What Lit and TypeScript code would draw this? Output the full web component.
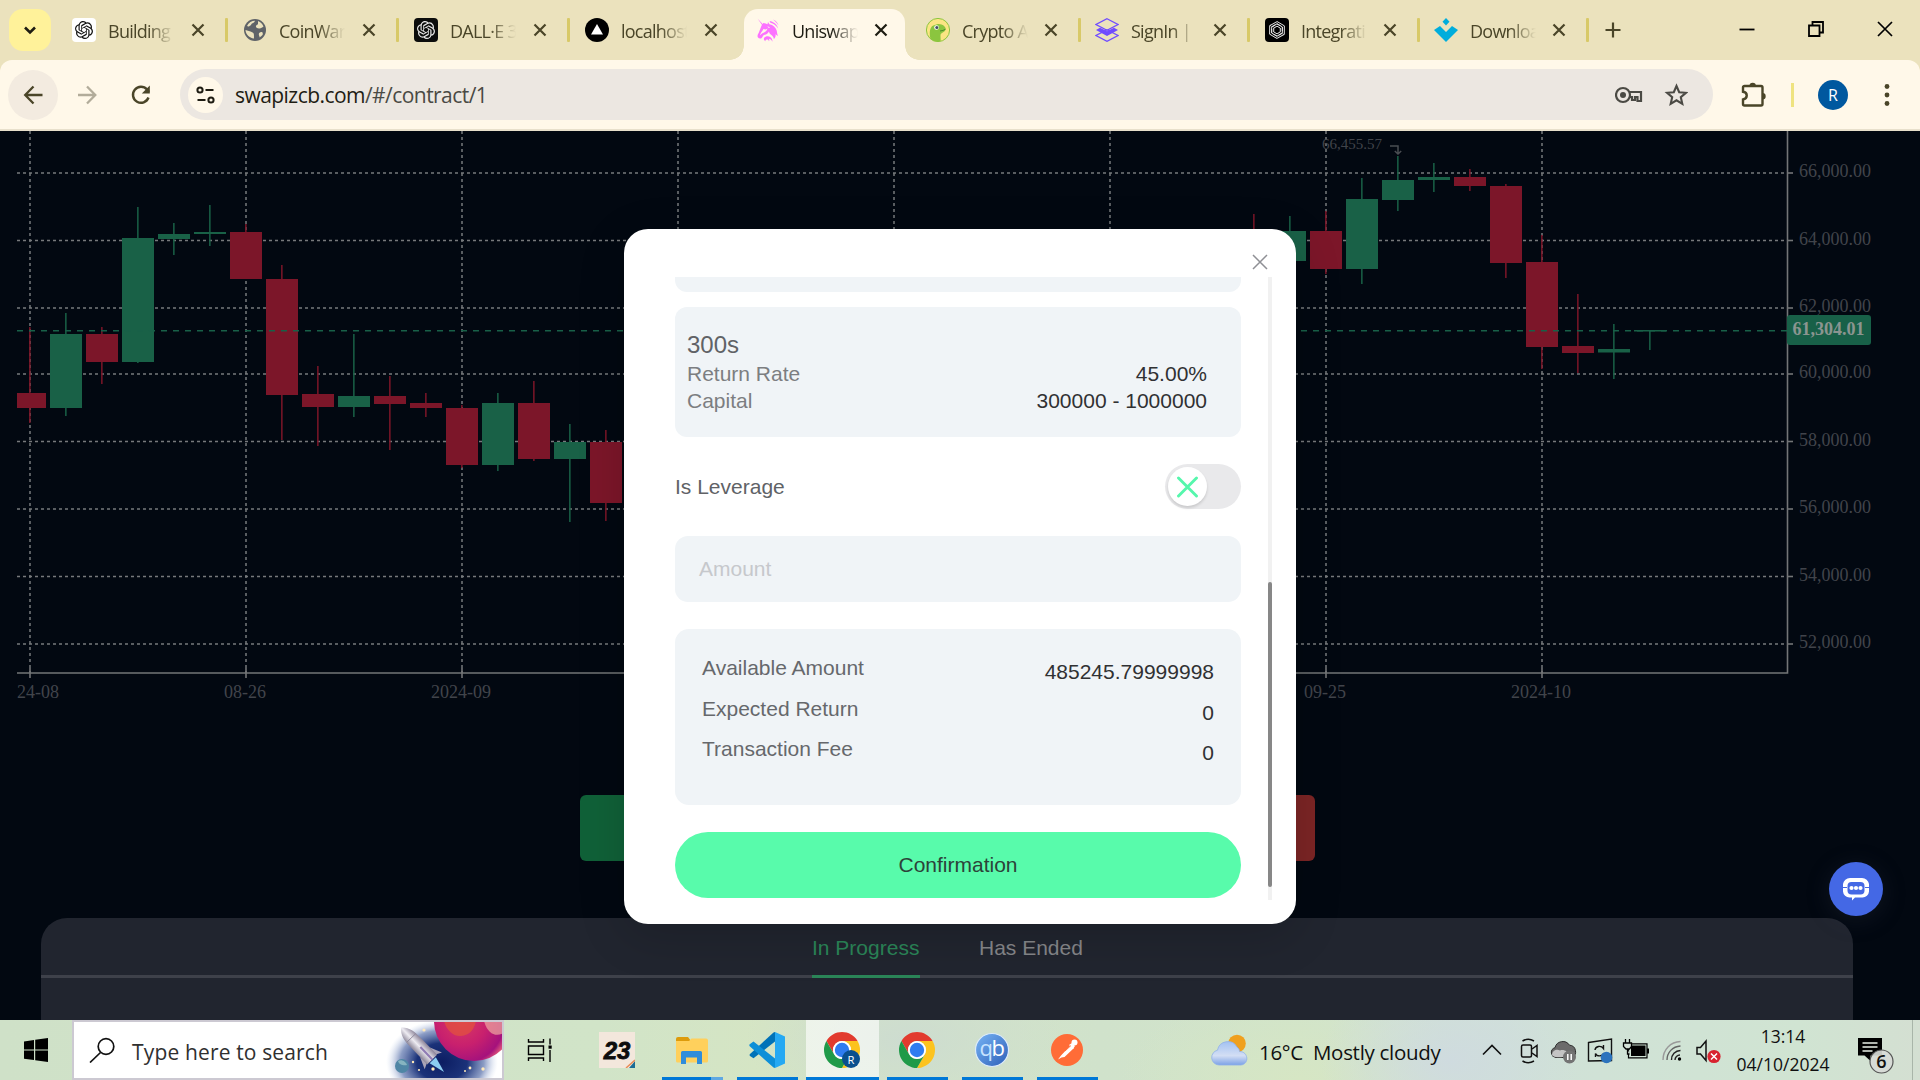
import { LitElement, html, svg, css, nothing } from "lit";
import { customElement } from "lit/decorators.js";
import { classMap } from "lit/directives/class-map.js";

const KNOT =
  "M22.2819 9.8211a5.9847 5.9847 0 0 0-.5157-4.9108 6.0462 6.0462 0 0 0-6.5098-2.9A6.0651 6.0651 0 0 0 4.9807 4.1818a5.9847 5.9847 0 0 0-3.9977 2.9 6.0462 6.0462 0 0 0 .7427 7.0966 5.98 5.98 0 0 0 .511 4.9107 6.051 6.051 0 0 0 6.5146 2.9001A5.9847 5.9847 0 0 0 13.2599 24a6.0557 6.0557 0 0 0 5.7718-4.2058 5.9894 5.9894 0 0 0 3.9977-2.9001 6.0557 6.0557 0 0 0-.7475-7.0729zm-9.022 12.6081a4.4755 4.4755 0 0 1-2.8764-1.0408l.1419-.0804 4.7783-2.7582a.7948.7948 0 0 0 .3927-.6813v-6.7369l2.02 1.1686a.071.071 0 0 1 .038.052v5.5826a4.504 4.504 0 0 1-4.4945 4.4944zm-9.6607-4.1254a4.4708 4.4708 0 0 1-.5346-3.0137l.142.0852 4.783 2.7582a.7712.7712 0 0 0 .7806 0l5.8428-3.3685v2.3324a.0804.0804 0 0 1-.0332.0615L9.74 19.9502a4.4992 4.4992 0 0 1-6.1408-1.6464zM2.3408 7.8956a4.485 4.485 0 0 1 2.3655-1.9728V11.6a.7664.7664 0 0 0 .3879.6765l5.8144 3.3543-2.0201 1.1685a.0757.0757 0 0 1-.071 0l-4.8303-2.7865A4.504 4.504 0 0 1 2.3408 7.872zm16.5963 3.8558L13.1038 8.364 15.1192 7.2a.0757.0757 0 0 1 .071 0l4.8303 2.7913a4.4944 4.4944 0 0 1-.6765 8.1042v-5.6772a.79.79 0 0 0-.407-.667zm2.0107-3.0231l-.142-.0852-4.7735-2.7818a.7759.7759 0 0 0-.7854 0L9.409 9.2297V6.8974a.0662.0662 0 0 1 .0284-.0615l4.8303-2.7866a4.4992 4.4992 0 0 1 6.6802 4.66zM8.3065 12.863l-2.02-1.1638a.0804.0804 0 0 1-.038-.0567V6.0742a4.4992 4.4992 0 0 1 7.3757-3.4537l-.142.0805L8.704 5.459a.7948.7948 0 0 0-.3927.6813zm1.0976-2.3654l2.602-1.4998 2.6069 1.4998v2.9994l-2.5974 1.4997-2.6067-1.4997Z";

const favicons: Record<string, unknown> = {
  knotLight: svg`<rect width="24" height="24" rx="4" fill="#fff"/><path transform="translate(3 3) scale(.75)" d=${KNOT} fill="#111"/>`,
  globe: svg`<circle cx="12" cy="12" r="11" fill="#5f6368"/><path d="M11 20.500c-4.600-.5-8.200-4-8.500-8.500L7.500 13.500c1.500.500 3 1 3.300 2.500.2 1 .2 3 .2 4.500zM4 8c1.500-3.500 5-5.200 8-5.200-.5 1.500-1.500 2-3 2.600-1 .6-.5 1.600-1.600 2C6.300 7.900 5.500 9 4 8zM15 2.900c2.700 1 4.600 3 5.500 5.600-1.500.800-2.500 2.300-4.500 2-1.500-.3-3.500-.8-3-2.500.3-1 2-1.200 2-2.200zM19.500 17c-.8.800-1.800 1.700-3 2.500.3-1.500-.7-2-.7-3.300 0-1.500 1.500-2.500 3-2.200 1 .2 1.300 2 .7 3z" fill="#ebe2bd"/>`,
  knotDark: svg`<rect width="24" height="24" rx="4" fill="#0c0d0c"/><path transform="translate(3 3) scale(.75)" d=${KNOT} fill="#e9e9e9"/>`,
  vercel: svg`<circle cx="12" cy="12" r="12" fill="#000"/><path d="M12 6l6 10.600H6z" fill="#fff"/>`,
  unicorn: svg`<g fill="#fc72ff"><path d="M1.500.500l6.500 7-1 .8z"/><path fill-rule="evenodd" d="M7.500 5c1.500.2 2.800.6 4 1.300l.5-2.300 1.400 2.200c3.800.7 6.200 3 7.200 6 .6 2 .4 3.800 1.500 5.600-1.400-.3-2.100-.9-2.500-1.800.3 2.100-.3 3.700-1.700 5-.2-1.400-.7-2.500-1.600-3.300-1.700-1.300-3-2-3.300-4.200-1 2-2.500 2.900-4.400 3.300-1.500.4-1.800 1.700-2.700 2.900-1 1.300-2.900 1.200-3.900-.2s-.3-3.100.5-4.300c1.500-2.500 2.500-8.200 5-10.200zM7.500 11c-1.300 2.500-3.200 4.300-3.700 6.500.8-1 1.700-1.700 2.700-2.200 2-1 4.500-1.800 5-4.700-1.500 1.300-2.800 1-4 .4zM11.300 8.300l2.700.9-1.200.7z"/><path d="M13.500 3c3.800.6 7.500 3 8.700 7.500-2-3.200-4.700-5-7.800-5.800zM17 1.500c3 1 5 3.500 5.500 6-1.500-2.500-3.500-4.300-5.500-6z"/><path d="M8 20c1.500-2 4.500-2.200 6.500-.8 1.300 1 2 2.600 2 4.500-1-1.800-2.200-2.900-3.800-3 .7.700.8 1.700.3 2.600-.4-1.300-1.200-2-2.300-1.800-.8.100-1.300.8-1.300 1.700C8 22.500 7.600 21.200 8 20z"/></g>`,
  gecko: svg`<circle cx="12" cy="12" r="11.600" fill="#fbe583" stroke="#8cc63f" stroke-width="1"/><path d="M4.500 21C2.800 14.500 4 8 8.500 7c3-1.200 4.500-1.500 7-.5 3 1 4.500 3.200 4 5.200-.6 2.300-4 2.800-4.800 4.600-.6 1.800.3 4.500-.2 7A11 11 0 0 1 4.500 21z" fill="#8bc53f"/><path d="M14 13c2-.2 4-.7 5.500-1.800" stroke="#4b8b2b" fill="none"/><circle cx="10.500" cy="9.500" r="2.300" fill="#fff"/><circle cx="10.800" cy="9.500" r="1.500" fill="#444b60"/>`,
  stack: svg`<path d="M12 .7l11 5.800-11 5.800L1 6.500zM12 11.700l11 5.800-11 5.800-11-5.800z" fill="none" stroke="#6f4bff" stroke-width="1.300"/><path d="M1 12l4-2.300 7 3.600 7-3.600L23 12l-11 6z" fill="#6f4bff"/>`,
  aperture: svg`<rect width="24" height="24" rx="4" fill="#000"/><g fill="none" stroke="#e6e6e6" stroke-width="1">${[0, 60, 120, 180, 240, 300].map(
    (a) => svg`<path transform="rotate(${a} 12 12)" d="M12 3.500L19.300 7.800M12 5.800L17.300 8.900V13M12 8.200L15.300 10.100"/>`,
  )}</g>`,
  diamond: svg`<g fill="#00addc"><path d="M12 0l3.500 3.700L12 7.500 8.500 3.700z"/><path d="M6 8l6 6 6-6 6 4-4 4-8 8-8-8-4-4z"/></g>`,
};

interface TabInfo {
  icon: string;
  label: string;
  active?: boolean;
  noSep?: boolean;
}

const TABS: TabInfo[] = [
  { icon: "knotLight", label: "Building" },
  { icon: "globe", label: "CoinWar" },
  { icon: "knotDark", label: "DALL·E 3" },
  { icon: "vercel", label: "localhost", noSep: true },
  { icon: "unicorn", label: "Uniswap", active: true, noSep: true },
  { icon: "gecko", label: "Crypto A" },
  { icon: "stack", label: "SignIn | " },
  { icon: "aperture", label: "Integrati" },
  { icon: "diamond", label: "Downloa" },
];

@customElement("browser-bar")
class BrowserBar extends LitElement {
  static styles = css`
    :host { display: block; background: #ebe2bd; font-family: "Open Sans", "Noto Sans", sans-serif; }
    svg { display: block; flex: none; }
    .strip { display: flex; height: 60px; align-items: flex-start; }
    .search { width: 42px; height: 42px; margin: 9px 9px 0; border-radius: 14px; background: #fff29a; display: grid; place-items: center; }
    .tabs { display: grid; grid-template-columns: 171px 171px 171px 171px 170px 169px 170px 169px 168px; height: 60px; }
    .tab { display: flex; align-items: center; padding: 0 0 0 12px; margin-top: 9px; height: 42px; }
    .tab.active { background: #fff8e9; width: 161px; height: 51px; border-radius: 14px 14px 0 0; box-sizing: border-box; padding-bottom: 9px; position: relative; }
    .tab.active::before, .tab.active::after { content: ""; position: absolute; bottom: 0; width: 14px; height: 14px; }
    .tab.active::before { left: -14px; background: radial-gradient(circle at 0 0, transparent 13.5px, #fff8e9 14px); }
    .tab.active::after { right: -14px; background: radial-gradient(circle at 100% 0, transparent 13.5px, #fff8e9 14px); }
    .label { width: 66px; margin-left: 12px; overflow: hidden; white-space: nowrap; font-size: 18px; letter-spacing: -0.75px; color: #4a4528; line-height: 26px; padding-top: 1px;
      -webkit-mask-image: linear-gradient(90deg, #000 60%, transparent 100%); mask-image: linear-gradient(90deg, #000 60%, transparent 100%); }
    .active .label { color: #1e1c12; }
    .x { margin-left: 4px; }
    .tab:nth-child(n + 5) .x { margin-left: 2.5px; }
    .sep { width: 3px; height: 24px; margin-left: 7px; background: #d8c968; border-radius: 1px; }
    .plus { margin: 22px 0 0 15px; }
    .win { display: flex; gap: 53px; margin: 21px 27px 0 auto; }
    .bar { display: flex; align-items: center; height: 69px; background: #fff8e9; border-radius: 12px 12px 0 0; border-bottom: 2px solid #e8e0cc; padding: 0 20px 0 8px; }
    .round { width: 50px; height: 50px; border-radius: 50%; display: grid; place-items: center; }
    .back { background: #f3ebe0; }
    .fwd { margin-left: 4px; }
    .reload { margin-left: 4px; }
    .omni { display: flex; align-items: center; width: 1533px; box-sizing: border-box; height: 51px; border-radius: 26px; background: #ece7e1; margin-left: 14px; padding: 0 25px 0 8px; }
    .site { width: 35px; height: 36px; border-radius: 50%; background: #fff8e9; display: grid; place-items: center; }
    .url { margin-left: 12px; font-size: 21px; letter-spacing: -0.55px; color: #4a4a44; line-height: 30px; }
    .url b { font-weight: 400; color: #1f1d14; }
    .key { margin-left: auto; }
    .star { margin-left: 21px; }
    .ext { margin-left: 27px; }
    .vsep { width: 3px; height: 24px; background: #efe380; margin-left: 24px; }
    .avatar { width: 30px; height: 30px; border-radius: 50%; background: #00589f; color: #fff; font-size: 16px; line-height: 30px; text-align: center; margin-left: 24px; }
    .dots { margin-left: 33px; }
  `;

  render() {
    return html`
      <div class="strip">
        <div class="search"><svg width="16" height="16" viewBox="0 0 16 16"><path d="M3 5.500l5 5 5-5" fill="none" stroke="#1e1c12" stroke-width="2.600"/></svg></div>
        <div class="tabs">
          ${TABS.map(
            (t) => html`<div class=${classMap({ tab: true, active: !!t.active })}>
              <svg width="24" height="24" viewBox="0 0 24 24">${favicons[t.icon]}</svg>
              <span class="label">${t.label}</span>
              <svg class="x" width="40" height="24" viewBox="0 0 40 24"><path d="M14.500 6.500l11 11M25.500 6.500l-11 11" stroke=${t.active ? "#1e1c12" : "#4a4528"} stroke-width="2.200"/></svg>
              ${t.noSep ? nothing : html`<i class="sep"></i>`}
            </div>`,
          )}
        </div>
        <svg class="plus" width="16" height="16" viewBox="0 0 16 16"><path d="M8 .5v15M.5 8h15" stroke="#4a4528" stroke-width="2.200"/></svg>
        <div class="win">
          <svg width="16" height="16" viewBox="0 0 16 16"><path d="M.5 8.500h15" stroke="#000" stroke-width="1.800"/></svg>
          <svg width="16" height="16" viewBox="0 0 16 16"><path d="M1 4.500h10.500V15H1zM4.500 4.500V1H15v10.500h-3.500" fill="none" stroke="#000" stroke-width="1.800"/></svg>
          <svg width="16" height="16" viewBox="0 0 16 16"><path d="M1 1l14 14M15 1L1 15" stroke="#000" stroke-width="1.700"/></svg>
        </div>
      </div>
      <div class="bar">
        <div class="round back"><svg width="24" height="24" viewBox="0 0 24 24"><path d="M21.500 12H5M12.500 3.500L4.200 12l8.300 8.500" fill="none" stroke="#4a4528" stroke-width="2.300"/></svg></div>
        <div class="round fwd"><svg width="24" height="24" viewBox="0 0 24 24"><path d="M3 12h16.500M12 3.500l8.300 8.500-8.300 8.500" fill="none" stroke="#b2ac9a" stroke-width="2.300"/></svg></div>
        <div class="round reload"><svg width="24" height="24" viewBox="0 0 24 24"><path d="M19.500 14.500A8 8 0 1 1 18 6.500L20 9" fill="none" stroke="#4a4528" stroke-width="2.400"/><path d="M20.800 2.500v8h-8z" fill="#4a4528"/></svg></div>
        <div class="omni">
          <div class="site"><svg width="20" height="20" viewBox="0 0 20 20" fill="none" stroke="#1e1c12" stroke-width="2"><circle cx="4" cy="5" r="2.600"/><path d="M9.500 5h8M1.500 15h8"/><circle cx="15" cy="15" r="2.600"/></svg></div>
          <div class="url"><b>swapizcb.com</b>/#/contract/1</div>
          <svg class="key" width="28" height="20" viewBox="0 0 28 20"><circle cx="8" cy="10" r="7" fill="none" stroke="#4b4a44" stroke-width="2.200"/><circle cx="8" cy="10" r="3" fill="#4b4a44"/><path d="M14.500 7H26v9h-3.500v-4H20v3h-3v-3h-2.500" fill="none" stroke="#4b4a44" stroke-width="2.200"/></svg>
          <svg class="star" width="24" height="24" viewBox="0 0 24 24"><path d="M12.500 3l2.700 6.200 6.700.6-5.100 4.400 1.500 6.600-5.800-3.500-5.800 3.500 1.500-6.600-5.100-4.400 6.700-.6z" fill="none" stroke="#4b4a44" stroke-width="2.100"/></svg>
        </div>
        <svg class="ext" width="27" height="27" viewBox="0 0 27 27"><path d="M3 6.500a1.500 1.500 0 0 1 1.500-1.500H21a1.500 1.500 0 0 1 1.500 1.500V23a1.500 1.500 0 0 1-1.500 1.500H4.500A1.500 1.500 0 0 1 3 23v-4.500c5-.8 5-7 0-7.700z" fill="none" stroke="#4a4528" stroke-width="2.400"/><path d="M9.500 5a3.200 3.200 0 0 1 6.400 0zM22.500 12a3.200 3.200 0 0 1 0 6.400z" fill="#4a4528"/></svg>
        <i class="vsep"></i>
        <div class="avatar">R</div>
        <svg class="dots" width="12" height="24" viewBox="0 0 12 24" fill="#4a4528"><circle cx="6" cy="3.500" r="2.400"/><circle cx="6" cy="12" r="2.400"/><circle cx="6" cy="20.500" r="2.400"/></svg>
      </div>
    `;
  }
}

// [slot, up, high, bodyTop, bodyBottom, low]
type Candle = [number, boolean, number, number, number, number];
const CANDLES: Candle[] = [
  [0, false, 327, 393, 408, 423],
  [1, true, 313, 334, 408, 416],
  [2, false, 327, 334, 362, 384],
  [3, true, 207, 238, 362, 363],
  [4, true, 223, 234, 239, 255],
  [5, true, 205, 232, 234, 246],
  [6, false, 224, 232, 279, 279],
  [7, false, 265, 279, 395, 440],
  [8, false, 366, 394, 407, 446],
  [9, true, 334, 396, 407, 417],
  [10, false, 376, 396, 404, 450],
  [11, false, 393, 403, 408, 417],
  [12, false, 405, 408, 465, 468],
  [13, true, 393, 403, 465, 471],
  [14, false, 381, 403, 459, 461],
  [15, true, 424, 442, 459, 522],
  [16, false, 430, 442, 503, 521],
  [34, false, 214, 240, 262, 270],
  [35, true, 216, 231, 261, 268],
  [36, false, 211, 231, 269, 274],
  [37, true, 178, 199, 269, 284],
  [38, true, 156, 180, 200, 211],
  [39, true, 163, 177, 180, 192],
  [40, false, 169, 177, 186, 191],
  [41, false, 184, 186, 263, 278],
  [42, false, 235, 262, 347, 369],
  [43, false, 294, 346, 353, 373],
  [44, true, 324, 349, 352.5, 379],
  [45, true, 330, 330, 331.5, 350],
];
const H_LINES: [number, string][] = [
  [173, "66,000.00"],
  [240.5, "64,000.00"],
  [308, "62,000.00"],
  [374, "60,000.00"],
  [441.5, "58,000.00"],
  [509, "56,000.00"],
  [576.5, "54,000.00"],
  [644, "52,000.00"],
];
const V_LINES: [number, string][] = [
  [30, "24-08"],
  [246, "08-26"],
  [462, "2024-09"],
  [678, ""],
  [894, ""],
  [1110, ""],
  [1326, "09-25"],
  [1542, "2024-10"],
];

@customElement("price-chart")
class PriceChart extends LitElement {
  static styles = css`
    :host { display: block; height: 619px; }
    svg { display: block; }
    text { font-family: "Liberation Serif", serif; font-size: 18px; fill: #41444b; }
    .mark { font-size: 15px; }
    .now { font-weight: 700; fill: #8b9590; }
    .mid { text-anchor: middle; }
    .grid { stroke: #77797c; stroke-width: 1.5; stroke-dasharray: 3 3; }
    .axis { stroke: #737577; stroke-width: 1.6; }
  `;

  render() {
    return html`<svg width="1920" height="619" viewBox="0 131 1920 619">
      <defs><clipPath id="plot"><rect x="17" y="131" width="1771" height="550"/></clipPath></defs>
      ${H_LINES.map(
        ([y, t]) => svg`<line class="grid" x1="17" x2="1787" y1=${y} y2=${y}/>
          <line class="axis" x1="1787" x2="1793" y1=${y} y2=${y}/>
          <text x="1799" y=${y + 4}>${t}</text>`,
      )}
      ${V_LINES.map(
        ([x, t]) => svg`<line class="grid" x1=${x} x2=${x} y1="131" y2="673"/>
          <line class="axis" x1=${x} x2=${x} y1="668" y2="678"/>
          <text class="mid" x=${x === 30 ? 38 : x - 1} y="698">${t}</text>`,
      )}
      <path class="axis" d="M17 673H1787.500V131" fill="none"/>
      <g clip-path="url(#plot)">
        ${CANDLES.map(([k, up, hi, top, bot, lo]) => {
          const c = 29.8 + 36 * k;
          const fill = up ? "#196147" : "#7c1629";
          return svg`<rect x=${c - 0.7} y=${hi} width="1.500" height=${lo - hi} fill=${fill}/>
            <rect x=${Math.round(c - 16)} y=${top} width="32" height=${bot - top} fill=${fill}/>`;
        })}
      </g>
      <line x1="17" x2="1787" y1="330.800" y2="330.800" stroke="#186048" stroke-width="1.500" stroke-dasharray="6 6"/>
      <text class="mark" x="1322" y="149">66,455.57</text>
      <path d="M1390 146h8v7.500M1394.800 151l3.200 3 3.200-3" fill="none" stroke="#4a4d52" stroke-width="1.500"/>
      <rect x="1787" y="315" width="84" height="30" rx="3" fill="#186048"/>
      <text class="now" x="1792.500" y="335">61,304.01</text>
    </svg>`;
  }
}

@customElement("order-dialog")
class OrderDialog extends LitElement {
  static styles = css`
    :host { display: flex; flex-direction: column; box-sizing: border-box; background: #fff; border-radius: 24px; box-shadow: 0 12px 48px rgba(0, 0, 0, 0.16); font: 21px/27px "Liberation Sans", Arial, sans-serif; color: #606266; }
    svg { display: block; }
    .head { display: flex; justify-content: flex-end; height: 48px; padding: 25px 28px 0 0; box-sizing: border-box; }
    .body { display: flex; height: 623px; padding-left: 51px; gap: 27px; }
    .col { width: 566px; display: flex; flex-direction: column; gap: 27px; }
    .stub { height: 15px; background: #f0f4f7; border-radius: 0 0 12px 12px; margin-bottom: -12px; }
    .plan { height: 130px; box-sizing: border-box; background: #f0f4f7; border-radius: 12px; padding: 21px 34px 0 12px; }
    .title { font-size: 24px; line-height: 32px; padding-top: 1px; margin-bottom: -1px; }
    .row { display: flex; justify-content: space-between; color: #7c7e81; }
    .row b { font-weight: 400; color: #303133; }
    .lever { display: flex; justify-content: space-between; align-items: center; height: 45px; }
    .switch { width: 76px; height: 45px; border-radius: 23px; background: #e9e9eb; padding: 3px; box-sizing: border-box; }
    .knob { width: 39px; height: 39px; border-radius: 50%; background: #fff; display: grid; place-items: center; box-shadow: 0 2px 3px rgba(0, 0, 0, 0.14); }
    .amount { height: 66px; border-radius: 13px; background: #f0f4f7; line-height: 66px; padding-left: 24px; color: #c6c8cc; }
    .sum { height: 176px; box-sizing: border-box; border-radius: 14px; background: #f0f4f7; padding: 25px 27px 0; }
    .line { display: flex; justify-content: space-between; height: 40.5px; color: #66686c; }
    .line b { font-weight: 400; color: #303133; padding-top: 4px; }
    .ok { height: 66px; border-radius: 33px; background: #58fbab; color: #2c4339; line-height: 66px; text-align: center; }
    .track { width: 4px; background: #f1f1f1; padding-top: 305px; box-sizing: border-box; }
    .thumb { height: 305px; background: #878787; border-radius: 2px; }
  `;

  render() {
    const sums = [
      ["Available Amount", "485245.79999998"],
      ["Expected Return", "0"],
      ["Transaction Fee", "0"],
    ];
    return html`
      <div class="head"><svg width="16" height="16" viewBox="0 0 16 16"><path d="M1 1l14 14M15 1L1 15" stroke="#8f9095" stroke-width="1.500"/></svg></div>
      <div class="body">
        <div class="col">
          <div class="stub"></div>
          <div class="plan">
            <div class="title">300s</div>
            <div class="row"><span>Return Rate</span><b>45.00%</b></div>
            <div class="row"><span>Capital</span><b>300000 - 1000000</b></div>
          </div>
          <div class="lever">
            <span>Is Leverage</span>
            <div class="switch"><div class="knob"><svg width="22" height="22" viewBox="0 0 22 22"><path d="M1.500 2l18 18M19.500 2l-18 18" stroke="#55f7ac" stroke-width="2.900" stroke-linecap="round"/></svg></div></div>
          </div>
          <div class="amount">Amount</div>
          <div class="sum">${sums.map(([k, v]) => html`<div class="line"><span>${k}</span><b>${v}</b></div>`)}</div>
          <div class="ok">Confirmation</div>
        </div>
        <div class="track"><div class="thumb"></div></div>
      </div>
    `;
  }
}

const chromeLogo = svg`<path d="M24 12h20.780A24 24 0 0 0 3.220 12L13.600 30A12 12 0 0 1 24 12z" fill="#e23b2e"/><path d="M34.400 30L24 48A24 24 0 0 0 44.780 12H24a12 12 0 0 1 10.400 18z" fill="#fcc31e"/><path d="M13.600 30L3.220 12A24 24 0 0 0 24 48l10.400-18a12 12 0 0 1-20.800 0z" fill="#1f9a48"/><circle cx="24" cy="24" r="12" fill="#fff"/><circle cx="24" cy="24" r="9.600" fill="#2f7cf0"/>`;

const apps: { box: string; art: unknown; run: string }[] = [
  {
    box: "0 0 36 36", run: "",
    art: svg`<g fill="none" stroke="#000" stroke-width="1.400"><path d="M4.500 7v3h15V7M4.500 29v-3h15v3M4.500 14h15v8.500h-15z"/><path d="M26 6.500v6M26 18v12"/></g><rect x="24.500" y="13.500" width="3.200" height="3.200" fill="#000"/>`,
  },
  {
    box: "0 0 36 36", run: "",
    art: svg`<rect width="36" height="36" fill="#f3e7dc"/><path d="M36 29v7h-6z" fill="#1c6c96"/><path d="M27 36l9-8" stroke="#e98b56" stroke-width="1.500"/><text x="18" y="26.500" text-anchor="middle" font-family="Liberation Sans, sans-serif" font-weight="700" font-style="italic" font-size="24" stroke="#0d0d0d" stroke-width=".8" fill="#0d0d0d">23</text>`,
  },
  {
    box: "0 0 36 36", run: "split",
    art: svg`<path d="M2 7a2 2 0 0 1 2-2h10l3 4H2z" fill="#dd9b0c"/><path d="M2 9h13l2.500-2.500H32A2 2 0 0 1 34 8.500V29a1.500 1.500 0 0 1-1.500 1.500h-29A1.500 1.500 0 0 1 2 29z" fill="#ffd05c"/><path d="M7 32V20.500a1.500 1.500 0 0 1 1.500-1.500h18a1.500 1.500 0 0 1 1.500 1.500V32h-5v-6.500H12V32z" fill="#2f8ddb"/>`,
  },
  {
    box: "0 0 36 36", run: "on",
    art: svg`<path d="M26 0v9.500L4.500 26.300 1 24a1.500 1.500 0 0 1 0-2L24.500.600z" fill="#0072b8"/><path d="M1 12l3.500-2.500L26 26.500V36l-1.500-.5L1 14.500a1.500 1.500 0 0 1 0-2.500z" fill="#0d8fd8"/><path d="M26 0l10 4.500v27L26 36z" fill="#25a9f3"/>`,
  },
  {
    box: "0 0 48 48", run: "wide",
    art: svg`${chromeLogo}<circle cx="36" cy="36" r="12" fill="#0a4f8e"/><text x="36" y="42" text-anchor="middle" font-family="Open Sans, sans-serif" font-size="15" fill="#fff">R</text>`,
  },
  { box: "0 0 48 48", run: "on", art: chromeLogo },
  {
    box: "0 0 36 36", run: "on",
    art: svg`<defs><linearGradient id="qbg" x2="1" y2="1"><stop stop-color="#78b4f5"/><stop offset="1" stop-color="#2c5fb8"/></linearGradient></defs><circle cx="18" cy="18" r="16.500" fill="url(#qbg)" stroke="#dcebfa" stroke-width="1.200"/><text x="5.500" y="24" font-family="Open Sans, sans-serif" font-size="22" fill="#c8e3ff">q</text><text x="17.500" y="24" font-family="Open Sans, sans-serif" font-size="22" fill="#fff">b</text>`,
  },
  {
    box: "0 0 36 36", run: "on",
    art: svg`<circle cx="18" cy="18" r="16" fill="#ff6c37"/><path d="M9 27.500l3-4 10-10.500 3 3-9.500 9-3 .5z" fill="#fff"/><path d="M20 13l3-2 3 3-2 3z" fill="#fff"/><circle cx="25.500" cy="10.500" r="3" fill="#fff"/><path d="M16 19l6-5.500" stroke="#ff6c37" stroke-width=".9"/>`,
  },
];

const tray = [
  svg`<path d="M9 21.500l9-9 9 9" fill="none" stroke="#111" stroke-width="1.600"/>`,
  svg`<g fill="none" stroke="#111" stroke-width="1.500"><rect x="11.500" y="12" width="10" height="12" rx="1.500"/><path d="M22 16l5-3.500v11L22 20M12.500 8c3.500-2 8-2 11.500 0M12.500 28c3.500 2 8 2 11.500 0"/></g>`,
  svg`<path d="M10 24.500a5 5 0 0 1-1-9.800 8 8 0 0 1 14.500-2.500A6.500 6.500 0 0 1 26 24.500z" fill="#6b6b6b" stroke="#2b2b2b"/><path d="M6 22c.5-5 5-6 8-4.500 4-1.500 8 1 8.500 4.500-1 2.500-15 3.500-16.500 0z" fill="#c4c4c4"/><circle cx="23.500" cy="24" r="6.500" fill="#747474"/><path d="M21.800 21v6M25.200 21v6" stroke="#fff" stroke-width="1.500"/>`,
  svg`<path d="M6.500 9.500L29.500 6v21.500l-23 .5z" fill="none" stroke="#111" stroke-width="1.400"/><path d="M13 17c.5-4 6-5 8.500-1.500V12M22 20c-1.500 3.500-7 4-8.500.5V24" fill="none" stroke="#111" stroke-width="1.400"/><circle cx="24.500" cy="24.500" r="5.800" fill="#2b72bd"/>`,
  svg`<rect x="13" y="12.500" width="14.500" height="10.500" fill="#000"/><path d="M10.500 10.800h18.500v14H10.500z" fill="none" stroke="#000" stroke-width="1.200"/><rect x="29" y="15.500" width="2" height="5" fill="#000"/><path d="M7.500 6v4M11.500 6v4M5.500 10h8v3.500l-2 2.500H8l-2.500-2.500zM9.500 16v5h2" fill="#d3e0d6" stroke="#000" stroke-width="1.300"/>`,
  svg`<g fill="none" stroke="#222" stroke-width="1.400"><path d="M21 27a5 5 0 0 1 5-5" /><path d="M17.500 27a9 9 0 0 1 9-9.500"/><path d="M13 27c0-7.500 5.500-13.500 13.500-14" stroke="#666"/><path d="M9 27C9 16.500 16.500 9 26.500 8.500" stroke="#999"/></g><circle cx="25.500" cy="26" r="1.700" fill="#000"/>`,
  svg`<path d="M7 14.500h3.500l5.500-6.500v19.500L10.500 21H7z" fill="none" stroke="#111" stroke-width="1.500"/><circle cx="24" cy="23.500" r="6.600" fill="#d8232f"/><path d="M21 20.500l6 6M27 20.500l-6 6" stroke="#fff" stroke-width="1.500"/>`,
];

@customElement("task-bar")
class TaskBar extends LitElement {
  static styles = css`
    :host { display: flex; height: 60px; font-family: "Open Sans", "Noto Sans", sans-serif; color: #101010;
      background: radial-gradient(ellipse 130px 90px at 1450px 40px, #cfdbdf, transparent), radial-gradient(ellipse 160px 80px at 905px 20px, #cddcd0, transparent), radial-gradient(ellipse 180px 90px at 1300px 60px, #d6e6c4, transparent), linear-gradient(90deg, #cfe1c8 0, #d1e4c8 600px, #d5e5c4 760px, #d0e2cb 1100px, #d1e4ca 1300px, #d0e1d8 1500px, #d0e4d2 1800px, #d4dfd2 1920px); }
    svg { display: block; }
    .start { width: 72px; display: grid; place-items: center; }
    .search { width: 432px; height: 60px; box-sizing: border-box; border: 2px solid #ccc9d2; background: #fff; display: flex; align-items: center; font-size: 21px; letter-spacing: 0.15px; color: #303030; overflow: hidden; }
    .glass { margin-left: 15px; }
    .hint { margin-left: 17px; width: 233px; padding-top: 3px; white-space: nowrap; }
    .art { margin: 0 -2px 0 auto; }
    .app { width: 75px; display: flex; flex-direction: column; align-items: center; justify-content: space-between; padding-top: 12px; box-sizing: border-box; }
    .app.active { background: linear-gradient(rgba(255, 255, 255, 0.62), rgba(255, 255, 255, 0.62)) no-repeat right / 73px 100%; }
    .run { height: 3px; width: 61px; margin-left: 2px; }
    .run.on, .run.wide { background: #0078d7; }
    .run.wide { width: 73px; }
    .run.split { background: linear-gradient(90deg, #0078d7 49px, #5fa8e2 49px); }
    .weather { display: flex; align-items: center; width: 263px; margin-left: auto; font-size: 20.5px; letter-spacing: -0.3px; white-space: pre; }
    .weather span { margin-left: 11px; padding-top: 3px; }
    .tray { display: flex; align-items: center; padding-top: 2px; }
    .clock { width: 114px; text-align: center; font-size: 17.5px; line-height: 28px; padding-top: 2px; }
    .note { width: 72px; display: grid; justify-items: center; align-items: start; padding-top: 11px; box-sizing: border-box; }
    .edge { width: 7px; border-left: 1px solid #a9b5a9; }
  `;

  render() {
    return html`
      <div class="start"><svg width="24" height="24" viewBox="0 0 24 24"><path d="M0 3.400L10 2v9.500H0zM11.200 1.800L24 0v11.500H11.200zM0 12.600h10V22L0 20.700zM11.200 12.600H24V24l-12.800-1.700z" fill="#000"/></svg></div>
      <div class="search">
        <svg class="glass" width="26" height="26" viewBox="0 0 26 26"><circle cx="17" cy="9.500" r="7.800" fill="none" stroke="#111" stroke-width="1.700"/><path d="M11.500 15.500L1 25.500" stroke="#111" stroke-width="1.700"/></svg>
        <span class="hint">Type here to search</span>
        <svg class="art" width="118" height="58" viewBox="386 1021 118 58">
          <defs>
            <radialGradient id="sky"><stop offset="0" stop-color="#0c1d62"/><stop offset=".45" stop-color="#1b3279"/><stop offset=".75" stop-color="#5b73ac" stop-opacity=".7"/><stop offset="1" stop-color="#c9d6ee" stop-opacity="0"/></radialGradient>
            <radialGradient id="planet" cx=".35" cy=".5" r=".62"><stop offset="0" stop-color="#d93a62"/><stop offset=".5" stop-color="#c8206e"/><stop offset=".85" stop-color="#a5127c"/><stop offset="1" stop-color="#e8607a"/></radialGradient>
            <linearGradient id="hull" x2="1"><stop stop-color="#8d8799"/><stop offset=".5" stop-color="#eeecf2"/><stop offset="1" stop-color="#8c8499"/></linearGradient>
          </defs>
          <ellipse cx="442" cy="1062" rx="56" ry="42" fill="url(#sky)"/>
          <circle cx="474" cy="1021" r="40" fill="url(#planet)"/>
          <path d="M444 1021h32c-2 10-8 15-16 15s-14-7-16-15z" fill="#e2503f" opacity=".75"/>
          <path d="M484 1021c4 14 12 16 20 12v-12z" fill="#f0a9a0" opacity=".7"/>
          <circle cx="402" cy="1066" r="7" fill="#4f86a5"/><path d="M398 1061c4-2 8 1 9 4-3 1-8 0-9-4z" fill="#86b4c0"/>
          <g transform="translate(419 1046) rotate(-44) scale(.86)"><path d="M-8 10l-6 14 8-4zM8 10l6 14-8-4z" fill="#a9a3b6"/><path d="M0-30c7 6 8 14 8 24v28H-8V-6c0-10 1-18 8-24z" fill="url(#hull)"/><path d="M-7-13h14" stroke="#8a8498"/><path d="M-1 2h2.500v20H-1z" fill="#8f7bb3"/><path d="M-5 23H5L0 42z" fill="#8ccdf2"/></g>
          <g fill="#ffe9b8"><circle cx="433" cy="1069" r="1.700"/><circle cx="470" cy="1068" r="1.400"/><circle cx="483" cy="1069" r="1.700"/><circle cx="413" cy="1062" r="1.200"/><circle cx="419" cy="1070" r="1.100"/><circle cx="424" cy="1030" r="1.600"/><circle cx="465" cy="1071" r="1"/></g>
        </svg>
      </div>
      ${apps.map(
        (a) => html`<div class=${classMap({ app: true, active: a.run === "wide" })}>
          <svg width="36" height="36" viewBox=${a.box}>${a.art}</svg>
          <i class="run ${a.run}"></i>
        </div>`,
      )}
      <div class="weather">
        <svg width="37" height="32" viewBox="0 0 37 32"><defs><linearGradient id="cl" x2="0" y2="1"><stop stop-color="#a3c2f2"/><stop offset=".6" stop-color="#d3def4"/><stop offset="1" stop-color="#7ca2e6"/></linearGradient></defs><circle cx="26" cy="9.500" r="8.800" fill="#f0a01e"/><path d="M8 31a7.500 7.500 0 0 1-1.500-14.800A10.500 10.500 0 0 1 26 13c2 1.500 2.500 3 2.500 4.500 9 0 10 12.500 1.500 13.500z" fill="url(#cl)" stroke="#8fb0ea" stroke-width=".8"/></svg>
        <span>16°C  Mostly cloudy</span>
      </div>
      <div class="tray">${tray.map((t) => html`<svg width="36" height="36" viewBox="0 0 36 36">${t}</svg>`)}</div>
      <div class="clock">13:14<br />04/10/2024</div>
      <div class="note"><svg width="40" height="46" viewBox="0 0 40 46"><path d="M2 7h24v17.500H14.500V30l-6-5.500H2z" fill="#000"/><path d="M6.500 12h15M6.500 16h15M6.500 20h10" stroke="#e9efe6" stroke-width="1.500"/><circle cx="25.500" cy="30.500" r="11.500" fill="#d7dad6" fill-opacity=".92" stroke="#555" stroke-width="1.200"/><text x="25.500" y="37" text-anchor="middle" font-family="Open Sans, sans-serif" font-size="18" font-weight="600" fill="#111">6</text></svg></div>
      <div class="edge"></div>
    `;
  }
}

@customElement("app-root")
class AppRoot extends LitElement {
  static styles = css`
    :host { display: flex; flex-direction: column; width: 1920px; height: 1080px; overflow: hidden; }
    .page { position: relative; height: 889px; background: #020811; overflow: hidden; font: 21px/27px "Liberation Sans", Arial, sans-serif; }
    .trade { display: flex; gap: 15px; width: 735px; margin: 45px 0 0 580px; }
    .trade i { flex: 1; height: 66px; border-radius: 6px; background: #106138; }
    .trade i + i { background: #7c2525; }
    .orders { width: 1812px; height: 140px; margin: 57px 0 0 41px; border-radius: 26px 26px 0 0; background: #21252f; }
    .tabs { display: flex; gap: 59px; height: 60px; box-sizing: border-box; padding-left: 771px; color: #858689; box-shadow: inset 0 -3px #3e414a; }
    .tabs div { padding-top: 16px; box-sizing: border-box; height: 60px; }
    .tabs .on { color: #2b8558; border-bottom: 3px solid #2b8558; width: 108px; white-space: nowrap; }
    order-dialog { position: absolute; left: 624px; top: 98px; width: 672px; height: 695px; }
    .chat { position: absolute; left: 1829px; top: 731px; width: 54px; height: 54px; border-radius: 50%; background: #4468e5; display: grid; place-items: center; box-shadow: 0 4px 24px rgba(70, 70, 90, 0.22); }
  `;

  render() {
    return html`
      <browser-bar></browser-bar>
      <div class="page">
        <price-chart></price-chart>
        <div class="trade"><i></i><i></i></div>
        <div class="orders">
          <div class="tabs"><div class="on">In Progress</div><div>Has Ended</div></div>
        </div>
        <div class="chat"><svg width="28" height="24" viewBox="0 0 28 24"><path d="M8 1h12a7 7 0 0 1 7 6v7.500a6.500 6.500 0 0 1-6.500 6H13L10 23.500V20.500H7.500A6.500 6.500 0 0 1 1 14.500V7a7 7 0 0 1 7-6z" fill="#fff"/><rect x="5.500" y="5" width="17" height="12.500" rx="4" fill="#4468e5"/><path d="M0 10.500h5M23 10.500h5" stroke="#4468e5" stroke-width="1"/><circle cx="9.500" cy="11" r="2.100" fill="#fff"/><circle cx="14" cy="11" r="2.100" fill="#fff"/><circle cx="18.500" cy="11" r="2.100" fill="#fff"/></svg></div>
        <order-dialog></order-dialog>
      </div>
      <task-bar></task-bar>
    `;
  }
}
